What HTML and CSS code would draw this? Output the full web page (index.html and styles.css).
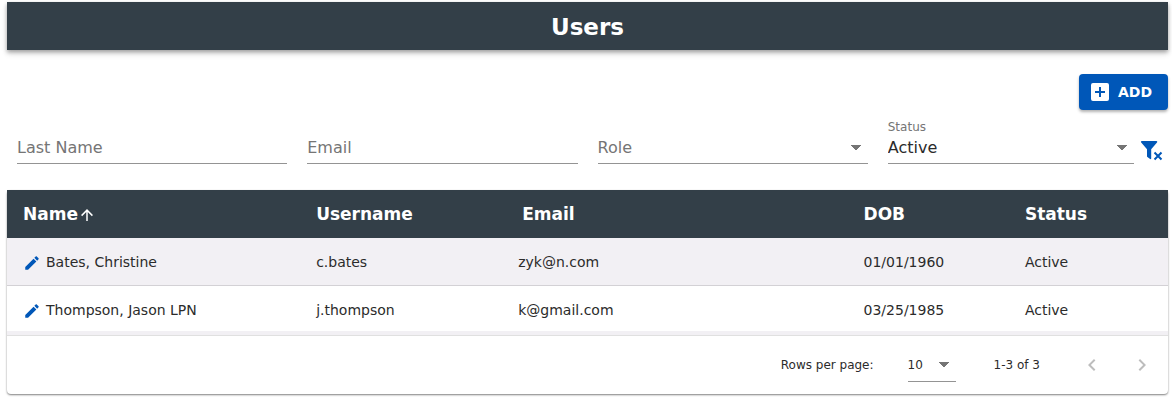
FILE: index.html
```
<!DOCTYPE html>
<html lang="en">
<head>
  <meta charset="UTF-8">
  <meta name="viewport" content="width=device-width, initial-scale=1.0">
  <title>Users</title>
  <link rel="stylesheet" href="styles.css">
</head>
<body>
  <header class="page-header">
    <h1>Users</h1>
  </header>

  <div class="toolbar">
    <button type="button" class="btn-add">
      <svg width="24" height="24" viewBox="0 0 24 24" aria-hidden="true"><path fill="currentColor" d="M17 13h-4v4h-2v-4H7v-2h4V7h2v4h4m2-8H5a2 2 0 0 0-2 2v14a2 2 0 0 0 2 2h14a2 2 0 0 0 2-2V5a2 2 0 0 0-2-2z"/></svg>
      Add
    </button>
  </div>

  <form class="filters">
    <div class="field">
      <label for="lastName">Last Name</label>
      <input type="text" id="lastName">
    </div>
    <div class="field">
      <label for="email">Email</label>
      <input type="text" id="email">
    </div>
    <div class="field">
      <label for="role">Role</label>
      <select id="role">
        <option value=""></option>
      </select>
    </div>
    <div class="filter-last">
      <div class="field filled">
        <label for="status">Status</label>
        <select id="status">
          <option>Active</option>
        </select>
      </div>
      <button type="button" class="btn-clear" aria-label="Clear filters">
        <svg width="22" height="22" viewBox="0 0 22 22" aria-hidden="true">
          <path fill="currentColor" d="M0.8 1h14.6c.8 0 1.2.9.6 1.500L10.200 9.300v9.200c0 .6-.6.800-1.100.5L6.400 17c-.3-.2-.4-.5-.4-.8V9.300L.2 2.500C-.4 1.900 0 1 .8 1z"/>
          <path fill="none" stroke="currentColor" stroke-width="2" d="M13.500 12.500l7 7M20.500 12.500l-7 7"/>
        </svg>
      </button>
    </div>
  </form>

  <div class="card">
    <table class="users">
      <thead>
        <tr>
          <th class="col-name" aria-sort="ascending">Name<svg width="18" height="18" viewBox="0 0 24 24" aria-hidden="true"><path fill="currentColor" d="M13 20h-2V8l-5.500 5.500-1.420-1.420L12 4.160l7.920 7.920-1.420 1.420L13 8v12z"/></svg></th>
          <th class="col-username">Username</th>
          <th class="col-email">Email</th>
          <th class="col-dob">DOB</th>
          <th>Status</th>
        </tr>
      </thead>
      <tbody>
        <tr>
          <td>
            <div class="name">
              <button type="button" class="btn-edit" aria-label="Edit Bates, Christine"><svg width="18" height="18" viewBox="0 0 24 24" aria-hidden="true"><path fill="currentColor" d="M20.710 7.040c.39-.39.39-1.040 0-1.410l-2.340-2.340c-.37-.39-1.020-.39-1.410 0l-1.840 1.830 3.750 3.750M3 17.250V21h3.750L17.810 9.930l-3.750-3.750L3 17.250z"/></svg></button>
              Bates, Christine
            </div>
          </td>
          <td>c.bates</td>
          <td class="email">zyk@n.com</td>
          <td>01/01/1960</td>
          <td>Active</td>
        </tr>
        <tr>
          <td>
            <div class="name">
              <button type="button" class="btn-edit" aria-label="Edit Thompson, Jason LPN"><svg width="18" height="18" viewBox="0 0 24 24" aria-hidden="true"><path fill="currentColor" d="M20.710 7.040c.39-.39.39-1.040 0-1.410l-2.340-2.340c-.37-.39-1.020-.39-1.410 0l-1.840 1.830 3.750 3.750M3 17.250V21h3.750L17.810 9.930l-3.750-3.750L3 17.250z"/></svg></button>
              Thompson, Jason LPN
            </div>
          </td>
          <td>j.thompson</td>
          <td class="email">k@gmail.com</td>
          <td>03/25/1985</td>
          <td>Active</td>
        </tr>
      </tbody>
    </table>

    <div class="pagination">
      <label for="perPage">Rows per page:</label>
      <select id="perPage">
        <option>10</option>
      </select>
      <span class="range">1-3 of 3</span>
      <button type="button" class="btn-page" aria-label="Previous page" disabled><svg width="24" height="24" viewBox="0 0 24 24" aria-hidden="true"><path fill="currentColor" d="M15.410 16.580L10.830 12l4.580-4.590L14 6l-6 6 6 6 1.410-1.420z"/></svg></button>
      <button type="button" class="btn-page" aria-label="Next page" disabled><svg width="24" height="24" viewBox="0 0 24 24" aria-hidden="true"><path fill="currentColor" d="M8.590 16.580L13.170 12 8.590 7.410 10 6l6 6-6 6-1.410-1.420z"/></svg></button>
    </div>
  </div>
</body>
</html>
```
FILE: styles.css
```
* {
  box-sizing: border-box;
}
body {
  margin: 0;
  padding: 2px 4px 8px 7px;
  font-family: Verdana, "DejaVu Sans", sans-serif;
  font-size: 14px;
  color: #2b2b2b;
  background: #fff;
}
button,
input,
select {
  font-family: inherit;
  color: inherit;
  margin: 0;
  padding: 0;
  border: 0;
  background: none;
}
svg {
  display: block;
}

.page-header {
  background: #333f48;
  color: #fff;
  text-align: center;
  box-shadow: 0 2px 4px rgba(0, 0, 0, 0.3), 0 4px 6px rgba(0, 0, 0, 0.12);
}
.page-header h1 {
  margin: 0;
  font-size: 23px;
  line-height: 50px;
  height: 48px;
}

.toolbar {
  display: flex;
  justify-content: flex-end;
  padding-top: 24px;
}
.btn-add {
  display: flex;
  align-items: center;
  gap: 6px;
  height: 36px;
  padding: 0 16px 0 9px;
  border-radius: 4px;
  background: #0057b8;
  color: #fff;
  font-size: 14px;
  font-weight: bold;
  text-transform: uppercase;
  box-shadow: 0 2px 3px rgba(0, 0, 0, 0.3);
}

.filters {
  display: grid;
  grid-template-columns: repeat(4, 1fr);
  column-gap: 20px;
  padding: 8px 10px 26px;
}
.filter-last {
  display: flex;
}
.field {
  position: relative;
  flex: 1;
  min-width: 0;
  padding-top: 14px;
}
.field label {
  position: absolute;
  top: 18px;
  left: 0;
  font-size: 16px;
  line-height: 24px;
  color: #757575;
  pointer-events: none;
}
.field.filled label {
  top: 1px;
  font-size: 12px;
  line-height: 16px;
}
.field input,
.field select {
  display: block;
  width: 100%;
  height: 32px;
  border-bottom: 1px solid #949494;
  border-radius: 0;
  font-size: 16px;
}
/* small triangle at the right end of every drop-down */
select {
  appearance: none;
  background: linear-gradient(to bottom right, #757575 50%, transparent 51%) right 7px center / 5px 5px no-repeat,
    linear-gradient(to bottom left, #757575 50%, transparent 51%) right 12px center / 5px 5px no-repeat;
}
.btn-clear {
  width: 22px;
  margin: 20px -5px 1px 7px;
  color: #0057b8;
}
.btn-clear svg {
  overflow: visible;
}

.card {
  border-radius: 4px;
  box-shadow: 0 1px 2px rgba(0, 0, 0, 0.5);
}
.users {
  width: 100%;
  table-layout: fixed;
  border-collapse: separate;
  border-spacing: 0;
  border-bottom: 4px solid #f2f0f4;
}
.users th,
.users td {
  height: 48px;
  padding: 0 16px;
  text-align: left;
}
.users th {
  background: #333f48;
  color: #fff;
  font-size: 17px;
}
.users th svg {
  display: inline-block;
  vertical-align: -4px;
}
.users tbody tr:first-child td {
  background: #f2f0f4;
  border-bottom: 1px solid #d3d1d5;
}
.users tbody tr:last-child td {
  height: 45px;
  padding-top: 3px;
}
.users td.email {
  padding-left: 12px;
}
.col-name {
  width: 25.25%;
}
.col-username {
  width: 17.75%;
}
.col-email {
  width: 29.4%;
}
.col-dob {
  width: 13.9%;
}
.name {
  display: flex;
  align-items: center;
  gap: 5px;
}
.btn-edit {
  padding-top: 2px;
  color: #0057b8;
}

.pagination {
  display: flex;
  align-items: center;
  justify-content: flex-end;
  height: 59px;
  padding-right: 14px;
  border-top: 1px solid #e0e0e0;
  font-size: 12px;
}
.pagination select {
  width: 48px;
  height: 34px;
  margin: 0 38px 0 34px;
  border-bottom: 1px solid #949494;
  border-radius: 0;
  font-size: 12px;
}
.range {
  margin-right: 40px;
}
.btn-page {
  color: #bdbdbd;
}
.btn-page + .btn-page {
  margin-left: 26px;
}
```
